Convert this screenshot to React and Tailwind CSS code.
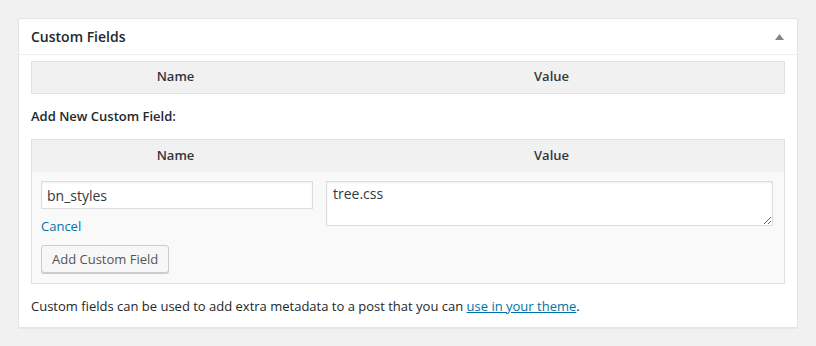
import React from "react";

const font = { fontFamily: '"Open Sans", "Noto Sans", sans-serif' };

function HeadRow({ top }) {
  return (
    <div className="grid grid-cols-[287px_1fr] bg-[#f1f1f1] text-[13px] font-semibold leading-[18px] text-[#32373c]">
      <div className={`${top ? "pt-[6px]" : "pt-[5px]"} pb-[8px] text-center`}>Name</div>
      <div className={`${top ? "pt-[6px]" : "pt-[5px]"} pb-[8px] text-center`}>Value</div>
    </div>
  );
}

export default function App() {
  return (
    <div className="min-h-[346px] bg-[#f1f1f1] pt-[18px] pl-[18px]" style={font}>
      <div className="w-[780px] border border-[#e5e5e5] bg-white shadow-[0_1px_1px_rgba(0,0,0,0.04)] text-[#23282d]">
        {/* header */}
        <div className="flex h-[36px] items-center justify-between border-b border-[#eeeeee] pl-[12px] pr-[13px]">
          <h2 className="text-[14px] font-semibold leading-[20px]">Custom Fields</h2>
          <svg width="9" height="6" viewBox="0 0 9 6">
            <polygon points="4.5,0 9,6 0,6" fill="#82878c" />
          </svg>
        </div>

        <div className="px-[12px] pb-[12px] pt-[6px]">
          {/* existing fields table */}
          <div className="border border-[#e1e1e1]">
            <HeadRow />
          </div>

          <p className="mt-[13px] mb-[14px] text-[13px] font-semibold leading-[18px]">
            Add New Custom Field:
          </p>

          {/* new field table */}
          <div className="border border-[#e1e1e1]">
            <HeadRow top />
            <div className="grid grid-cols-[287px_1fr] bg-[#f9f9f9]">
              <div className="pl-[9px] pt-[9px] pb-[10px]">
                <input
                  type="text"
                  defaultValue="bn_styles"
                  className="block h-[28px] w-[272px] border border-[#dddddd] bg-white px-[5px] text-[14px] text-[#32373c] shadow-[inset_0_1px_2px_rgba(0,0,0,0.07)] outline-none"
                />
                <a href="#" className="mt-[8px] block text-[13px] leading-[18px] text-[#0073aa]">
                  Cancel
                </a>
                <button className="mt-[10px] block h-[28px] whitespace-nowrap rounded-[3px] border border-[#cccccc] bg-[#f7f7f7] px-[10px] pb-[1px] text-[13px] leading-[26px] text-[#555555] shadow-[0_1px_0_#cccccc]">
                  Add Custom Field
                </button>
              </div>
              <div className="pl-[7px] pt-[9px] pr-[12px]">
                <textarea
                  defaultValue="tree.css"
                  className="block h-[45px] w-[447px] border border-[#dddddd] bg-white px-[6px] py-[2px] text-[14px] leading-[20px] text-[#32373c] shadow-[inset_0_1px_2px_rgba(0,0,0,0.07)] outline-none"
                />
              </div>
            </div>
          </div>

          <p className="mt-[13px] text-[13px] leading-[18px]">
            Custom fields can be used to add extra metadata to a post that you can{" "}
            <a href="#" className="text-[#0073aa] underline">
              use in your theme
            </a>
            .
          </p>
        </div>
      </div>
    </div>
  );
}
